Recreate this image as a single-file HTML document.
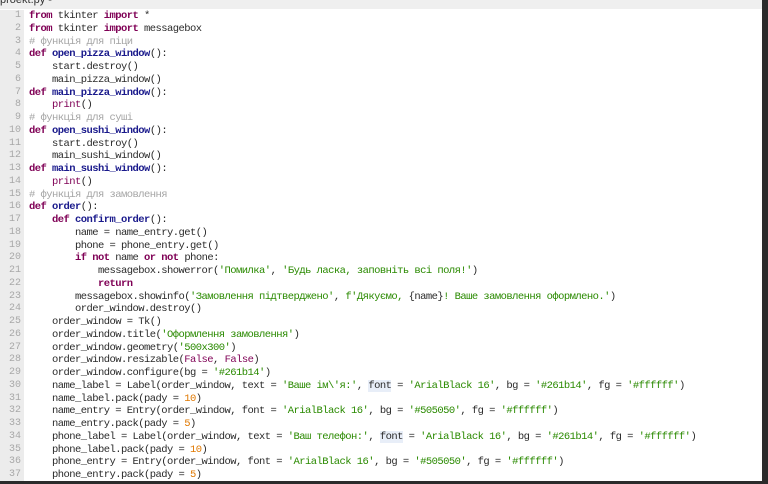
<!DOCTYPE html>
<html><head><meta charset="utf-8"><style>
html,body{margin:0;padding:0;width:768px;height:484px;overflow:hidden;background:#fff;}
#top{position:absolute;left:0;top:0;width:762px;height:9px;background:#efefef;}
#tab{position:absolute;left:0;top:-6px;font:11px "Liberation Sans",sans-serif;color:#333;}
#gut{position:absolute;left:0;top:10px;width:24px;height:471px;background:#ececec;}
#rb{position:absolute;left:762px;top:0;width:6px;height:484px;background:#2b2b2b;}
#bb{position:absolute;left:0;top:481px;width:768px;height:3px;background:#2b2b2b;}
#nums{position:absolute;left:0;top:10px;width:21px;text-align:right;font:10px/12.75px "Liberation Mono",monospace;color:#a8a8a8;}
#code{position:absolute;left:29px;top:10px;font:10.5px/12.75px "Liberation Mono","DejaVu Sans Mono",monospace;letter-spacing:-0.55px;color:#2a2a2a;white-space:pre;}
.k{color:#7f0055;font-weight:bold}
.f{color:#1a1a8c;font-weight:bold}
.s{color:#2a8a00}
.c{color:#a5a5a5}
.n{color:#e07800}
.h{background:#e8eef8}
</style></head><body>
<div id="top"><div id="tab">proekt.py - *</div></div>
<div id="gut"></div>
<div id="nums">1<br>2<br>3<br>4<br>5<br>6<br>7<br>8<br>9<br>10<br>11<br>12<br>13<br>14<br>15<br>16<br>17<br>18<br>19<br>20<br>21<br>22<br>23<br>24<br>25<br>26<br>27<br>28<br>29<br>30<br>31<br>32<br>33<br>34<br>35<br>36<br>37</div>
<div id="code"><span class="k">from</span> tkinter <span class="k">import</span> *
<span class="k">from</span> tkinter <span class="k">import</span> messagebox
<span class="c"># функція для піци</span>
<span class="k">def</span> <span class="f">open_pizza_window</span>():
    start.destroy()
    main_pizza_window()
<span class="k">def</span> <span class="f">main_pizza_window</span>():
    <span class="k" style="font-weight:normal">print</span>()
<span class="c"># функція для суші</span>
<span class="k">def</span> <span class="f">open_sushi_window</span>():
    start.destroy()
    main_sushi_window()
<span class="k">def</span> <span class="f">main_sushi_window</span>():
    <span class="k" style="font-weight:normal">print</span>()
<span class="c"># функція для замовлення</span>
<span class="k">def</span> <span class="f">order</span>():
    <span class="k">def</span> <span class="f">confirm_order</span>():
        name = name_entry.get()
        phone = phone_entry.get()
        <span class="k">if not</span> name <span class="k">or not</span> phone:
            messagebox.showerror(<span class="s">'Помилка'</span>, <span class="s">'Будь ласка, заповніть всі поля!'</span>)
            <span class="k">return</span>
        messagebox.showinfo(<span class="s">'Замовлення підтверджено'</span>, <span class="s">f'Дякуємо, </span>{name}<span class="s">! Ваше замовлення оформлено.'</span>)
        order_window.destroy()
    order_window = Tk()
    order_window.title(<span class="s">'Оформлення замовлення'</span>)
    order_window.geometry(<span class="s">'500x300'</span>)
    order_window.resizable(<span class="k" style="font-weight:normal">False</span>, <span class="k" style="font-weight:normal">False</span>)
    order_window.configure(bg = <span class="s">'#261b14'</span>)
    name_label = Label(order_window, text = <span class="s">'Ваше ім\'я:'</span>, <span class="h">font</span> = <span class="s">'ArialBlack 16'</span>, bg = <span class="s">'#261b14'</span>, fg = <span class="s">'#ffffff'</span>)
    name_label.pack(pady = <span class="n">10</span>)
    name_entry = Entry(order_window, font = <span class="s">'ArialBlack 16'</span>, bg = <span class="s">'#505050'</span>, fg = <span class="s">'#ffffff'</span>)
    name_entry.pack(pady = <span class="n">5</span>)
    phone_label = Label(order_window, text = <span class="s">'Ваш телефон:'</span>, <span class="h">font</span> = <span class="s">'ArialBlack 16'</span>, bg = <span class="s">'#261b14'</span>, fg = <span class="s">'#ffffff'</span>)
    phone_label.pack(pady = <span class="n">10</span>)
    phone_entry = Entry(order_window, font = <span class="s">'ArialBlack 16'</span>, bg = <span class="s">'#505050'</span>, fg = <span class="s">'#ffffff'</span>)
    phone_entry.pack(pady = <span class="n">5</span>)</div>
<div id="rb"></div>
<div id="bb"></div>
</body></html>
